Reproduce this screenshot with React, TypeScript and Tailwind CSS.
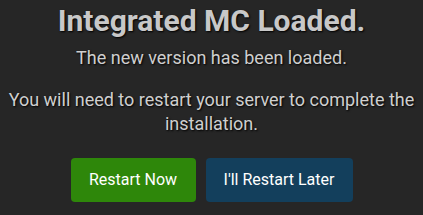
export default function App() {
  return (
    <div className="flex h-[215px] w-[423px] flex-col items-center bg-[#262626] text-center font-['Roboto',sans-serif] text-[#cfcfcf] [text-shadow:1px_1px_2px_#000]">
      <h1 className="mt-[3px] text-[30px] font-bold leading-[36px] text-[#c8c8c8]">
        Integrated MC Loaded.
      </h1>
      <p className="mt-[8px] text-[18px] leading-[22px]">The new version has been loaded.</p>
      <p className="mt-[19px] px-[4px] text-[18px] leading-[24px]">
        You will need to restart your server to complete the installation.
      </p>
      <div className="mt-[22px] flex gap-[10px]">
        <button className="h-[44px] w-[125px] rounded-[4px] bg-[#2e870a] text-[16px] text-white">
          Restart Now
        </button>
        <button className="h-[44px] w-[147px] rounded-[4px] bg-[#133f5c] text-[16px] text-white">
          I'll Restart Later
        </button>
      </div>
    </div>
  );
}
